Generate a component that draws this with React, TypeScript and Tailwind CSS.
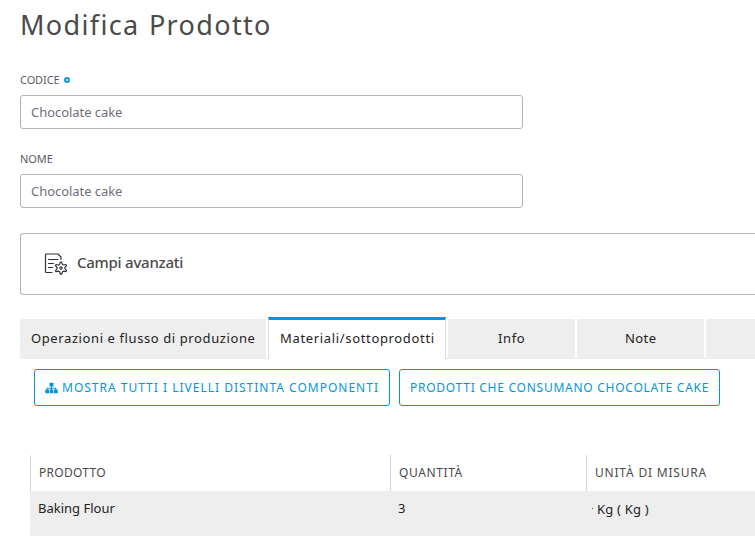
function SitemapIcon() {
  return (
    <svg width="13" height="12" viewBox="0 0 13 12" fill="currentColor">
      <rect x="4.500" y="0.700" width="4" height="3.800" rx="0.500" />
      <path d="M6 4h1v1.800h4.200v2.500h-1V6.800H7v1.500H6V6.800H2.600v1.500h-1V5.800H6z" />
      <rect x="0.200" y="7.600" width="3.800" height="3.600" rx="0.500" />
      <rect x="4.600" y="7.600" width="3.800" height="3.600" rx="0.500" />
      <rect x="9" y="7.600" width="3.800" height="3.600" rx="0.500" />
    </svg>
  );
}

function DocumentGearIcon() {
  return (
    <svg width="24" height="24" viewBox="0 0 24 24" fill="none" stroke="#32323c" strokeWidth="1.2" strokeLinecap="round" strokeLinejoin="round">
      <path d="M8 20.500H2.500a1 1 0 0 1-1-1V3a1 1 0 0 1 1-1h11.500l3 3v2.500" />
      <path d="M4.500 7.500h9.500M4.500 11.500h5M4.500 15.500h4" />
      <path d="M15.600 12.400l.8-2.400h1.200l.8 2.400 1 .6 2.500-.5.600 1.100-1.600 1.900v1.200l1.600 1.900-.6 1.100-2.500-.5-1 .6-.8 2.400h-1.200l-.8-2.400-1-.6-2.500.5-.6-1.100 1.600-1.900v-1.200l-1.600-1.900.6-1.100 2.500.5z" />
      <circle cx="17" cy="16.100" r="1.200" />
    </svg>
  );
}

function Field({ label, required, value }: { label: string; required?: boolean; value: string }) {
  return (
    <div className="w-[503px]">
      <div className="flex h-4 items-center gap-1 text-[11px] leading-4 text-[#5c5c66]">
        <span className="tracking-[-0.1px]">{label}</span>
        {required && <span className="size-[6px] rounded-full border-2 border-[#0696d7]" />}
      </div>
      <div className="mt-[7px] flex h-[34px] items-center rounded-[3px] border border-[#b3b3bd] px-[10px] pt-px text-[13px] text-[#70707a]">
        <span className="tracking-[-0.05px]">{value}</span>
      </div>
    </div>
  );
}

export default function App() {
  return (
    <main className="h-[536px] w-[755px] overflow-hidden bg-white pl-5 font-['Noto_Sans',sans-serif] text-[13px] text-[#333]">
      <h1 className="h-[72px] pt-[6px] text-[27px] leading-[38px] font-[450] tracking-[1.35px] text-[#4a4a4a] [word-spacing:1px]"><span>Modifica Prodotto</span></h1>
      <Field label="CODICE" required value="Chocolate cake" />
      <div className="h-[22px]" />
      <Field label="NOME" value="Chocolate cake" />
      <section className="mt-[25px] flex h-[62px] items-center rounded-l-[3px] border border-r-0 border-[#b3b3bd] pl-[23px] text-[15px] text-[#4a4a4a]">
        <DocumentGearIcon />
        <span className="mb-[3px] ml-[9px] font-medium tracking-[-0.25px]">Campi avanzati</span>
      </section>
      <nav className="mt-[22px] flex h-[42px] items-end text-[13px] text-[#222]">
        <div className="flex h-10 w-[246px] items-center rounded-t-[2px] bg-[#eee] pl-[11px]"><span className="tracking-[0.6px]">Operazioni e flusso di produzione</span></div>
        <div className="h-10 w-[2px] border-b border-[#ddd]" />
        <div className="flex h-[42px] w-[178px] items-center border-x border-t-[3px] border-x-[#ddd] border-t-[#0696d7] pb-[2px] pl-[11px]"><span className="tracking-[0.66px]">Materiali/sottoprodotti</span></div>
        <div className="h-10 w-[2px] border-b border-[#ddd]" />
        <div className="flex h-10 w-[127px] items-center rounded-t-[2px] bg-[#eee] pl-[50px]"><span className="tracking-[0.6px]">Info</span></div>
        <div className="h-10 w-[2px] border-b border-[#ddd]" />
        <div className="flex h-10 w-[127px] items-center rounded-t-[2px] bg-[#eee] pl-[48px]"><span className="tracking-[0.4px]">Note</span></div>
        <div className="h-10 w-[2px] border-b border-[#ddd]" />
        <div className="h-10 flex-1 rounded-tl-[2px] bg-[#eee]" />
      </nav>
      <div className="mt-[10px] ml-[14px] flex gap-[9px] text-[12px] whitespace-nowrap text-[#0696d7]">
        <button className="flex h-[37px] w-[356px] items-center rounded-[3px] border border-[#0696d7] pl-[10px]">
          <SitemapIcon />
          <span className="ml-[4px] tracking-[1px]">MOSTRA TUTTI I LIVELLI DISTINTA COMPONENTI</span>
        </button>
        <button className="flex h-[37px] w-[321px] items-center rounded-[3px] border border-[#0696d7] pl-[10px]">
          <span className="tracking-[0.74px]">PRODOTTI CHE CONSUMANO CHOCOLATE CAKE</span>
        </button>
      </div>
      <div className="mt-[49px] ml-[10px]">
        <div className="grid h-[36px] grid-cols-[360px_196px_1fr] text-[12px] text-[#4a4a4a]">
          <div className="flex items-center rounded-tl-[3px] border-l border-[#d5d5d5] pl-[8px]"><span className="tracking-[0.28px]">PRODOTTO</span></div>
          <div className="flex items-center border-l border-[#d5d5d5] pl-[8px]"><span className="tracking-[0.6px]">QUANTITÀ</span></div>
          <div className="flex items-center border-l border-[#d5d5d5] pl-[8px]"><span className="tracking-[0.8px]">UNITÀ DI MISURA</span></div>
        </div>
        <div className="bg-white">
          <div className="grid h-[36px] grid-cols-[360px_196px_1fr] rounded-bl-[3px] bg-[#eee] text-[13px] text-[#222]">
            <div className="flex items-center pl-[8px]"><span>Baking Flour</span></div>
            <div className="flex items-center pl-[8px]"><span>3</span></div>
            <div className="flex items-center pt-[2px] pl-[6px]"><span className="mb-1 size-px bg-[#666]" /><span className="ml-[4px] tracking-[0.2px]">Kg ( Kg )</span></div>
          </div>
          <div className="h-[9px] bg-[#eee]" />
        </div>
      </div>
    </main>
  );
}
